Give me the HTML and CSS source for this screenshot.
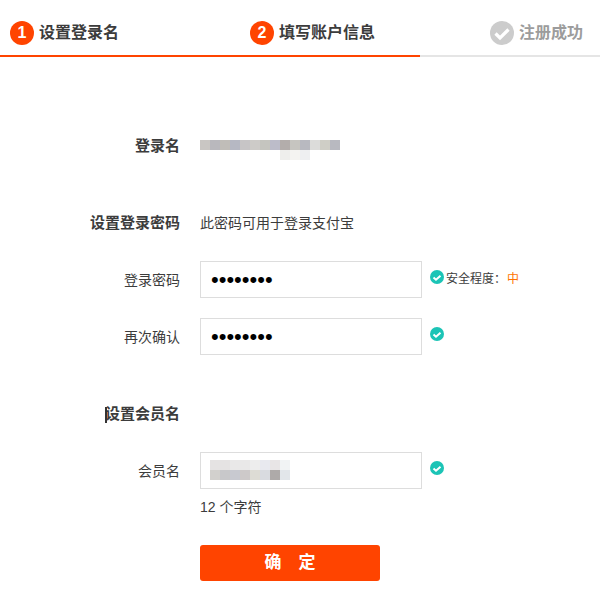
FILE: index.html
```html
<!DOCTYPE html>
<html lang="zh">
<head>
<meta charset="utf-8">
<title>填写账户信息</title>
<link rel="stylesheet" href="styles.css">
</head>
<body>
<header class="steps">
  <div class="step step-one"><span class="badge">1</span><span>设置登录名</span></div>
  <div class="step step-two"><span class="badge">2</span><span>填写账户信息</span></div>
  <div class="step step-three">
    <svg class="done-icon" viewBox="0 0 24 24"><circle cx="12" cy="12" r="12" fill="#ccc"/><path d="M5.5 12.5l4.5 4.500 8.500-8.500" fill="none" stroke="#fff" stroke-width="3.200"/></svg>
    <span>注册成功</span>
  </div>
</header>
<div class="progress"><div class="progress-fill"></div></div>
<main class="form">
  <div class="row row-account"><div class="label strong">登录名</div><div class="mosaic mosaic-account"></div></div>
  <div class="row row-heading-pass"><div class="label strong">设置登录密码</div><div class="hint">此密码可用于登录支付宝</div></div>
  <div class="row row-field"><div class="label">登录密码</div><div class="input">••••••••</div>
    <svg class="ok" viewBox="0 0 14 14"><circle cx="7" cy="7" r="7" fill="#1cc4b6"/><path d="M3.500 7.500l2.500 2.200 4.500-4" fill="none" stroke="#fff" stroke-width="2"/></svg>
    <span class="strength">安全程度：<em class="level">中</em></span></div>
  <div class="row row-field row-confirm"><div class="label">再次确认</div><div class="input">••••••••</div>
    <svg class="ok" viewBox="0 0 14 14"><circle cx="7" cy="7" r="7" fill="#1cc4b6"/><path d="M3.500 7.500l2.500 2.200 4.500-4" fill="none" stroke="#fff" stroke-width="2"/></svg></div>
  <div class="row row-heading-member"><div class="label strong"><span class="glitch">设置会员名</span></div></div>
  <div class="row row-field row-member"><div class="label">会员名</div><div class="input input-mosaic"><div class="mosaic mosaic-member"></div></div>
    <svg class="ok" viewBox="0 0 14 14"><circle cx="7" cy="7" r="7" fill="#1cc4b6"/><path d="M3.500 7.500l2.500 2.200 4.500-4" fill="none" stroke="#fff" stroke-width="2"/></svg></div>
  <div class="count">12 个字符</div>
  <button class="submit" type="button">确　定</button>
</main>
</body>
</html>
```
FILE: styles.css
```css
* { box-sizing: border-box; }
html, body { margin: 0; background: #fff; }
body { width: 600px; height: 612px; overflow: hidden; color: #3c3c3c; font: 14px/20px "Liberation Sans", "Noto Sans CJK SC", sans-serif; }
.steps { display: flex; height: 55px; padding-top: 21px; }
.step { display: flex; align-items: center; gap: 5px; height: 24px; font-size: 16px; font-weight: 700; }
.step-one { width: 250px; padding-left: 10px; }
.step-two { width: 240px; }
.step-three { color: #9c9c9c; }
.badge { width: 24px; height: 24px; border-radius: 50%; background: #ff4400; color: #fff; text-align: center; line-height: 24px; font-size: 16px; }
.done-icon { width: 24px; height: 24px; }
.progress { height: 2px; background: #e5e5e5; }
.progress-fill { width: 420px; height: 2px; background: #ff4400; }
.form { display: flex; flex-direction: column; }
.row { display: flex; align-items: center; }
.label { width: 180px; flex: none; text-align: right; margin-right: 20px; }
.strong { font-size: 15px; font-weight: 700; }
.row-account { margin-top: 79px; height: 24px; align-items: flex-start; }
.mosaic { width: 140px; height: 20px; background-repeat: no-repeat; }
.mosaic-account {
  margin-top: 4px;
  background-image:
    linear-gradient(90deg, #c9c6c3 0 10px, #b9b8bd 0 20px, #c0bdb8 0 30px, #b6b8c3 0 40px, #c7c5c6 0 50px, #cdcbc8 0 60px, #c5c5bf 0 70px, #bcbcc9 0 80px, #b3adab 0 90px, #c6c5c0 0 100px, #b8b9c0 0 110px, #dcdcda 0 120px, #cfcec6 0 130px, #b8b9c0 0 140px),
    linear-gradient(90deg, transparent 0 80px, #eeeeec 0 90px, #f4f3f1 0 100px, #eeeff1 0 110px, transparent 0);
  background-size: 140px 10px, 140px 10px;
  background-position: 0 0, 0 10px;
}
.row-heading-pass { margin-top: 53px; }
.hint { color: #3c3c3c; }
.row-field { height: 37px; margin-top: 28px; }
.row-confirm { margin-top: 20px; }
.row-heading-member { height: 20px; margin-top: 49px; }
.glitch { position: relative; }
.glitch::before { content: ""; position: absolute; left: 0; top: 2px; width: 2px; height: 16px; background: #333; }
.row-member { margin-top: 28px; }
.input { width: 222px; height: 37px; flex: none; border: 1px solid #ddd; padding-left: 10px; color: #000; font: 22px/35px "Liberation Sans", sans-serif; }
.input-mosaic { padding-top: 7px; padding-left: 9px; }
.mosaic-member {
  width: 80px;
  background-image:
    linear-gradient(90deg, #e5e3e3 0 20px, #e9e8e8 0 40px, #ededed 0 50px, #e8e9ef 0 60px, #eceef2 0 60px, #e8e5e6 0 70px, #f1f3f4 0 80px),
    linear-gradient(90deg, #d2d0cd 0 10px, #c8c8ca 0 20px, #c8c9d0 0 30px, #cdc9c9 0 40px, #dddcd5 0 50px, #d9dbe0 0 60px, #aeaaa9 0 70px, #e2e6ea 0 80px);
  background-size: 80px 10px, 80px 10px;
  background-position: 0 0, 0 10px;
}
.ok { width: 14px; height: 14px; margin-left: 8px; flex: none; align-self: flex-start; margin-top: 9px; }
.strength { font-size: 12px; margin-left: 2px; padding-bottom: 2px; }
.level { font-style: normal; color: #ff7300; margin-left: 1px; }
.count { margin: 8px 0 0 200px; }
.submit { width: 180px; height: 36px; margin: 28px 0 0 200px; border: 0; border-radius: 3px; background: #ff4400; color: #fff; font: 700 17px/36px "Liberation Sans", "Noto Sans CJK SC", sans-serif; padding: 0; }
```
